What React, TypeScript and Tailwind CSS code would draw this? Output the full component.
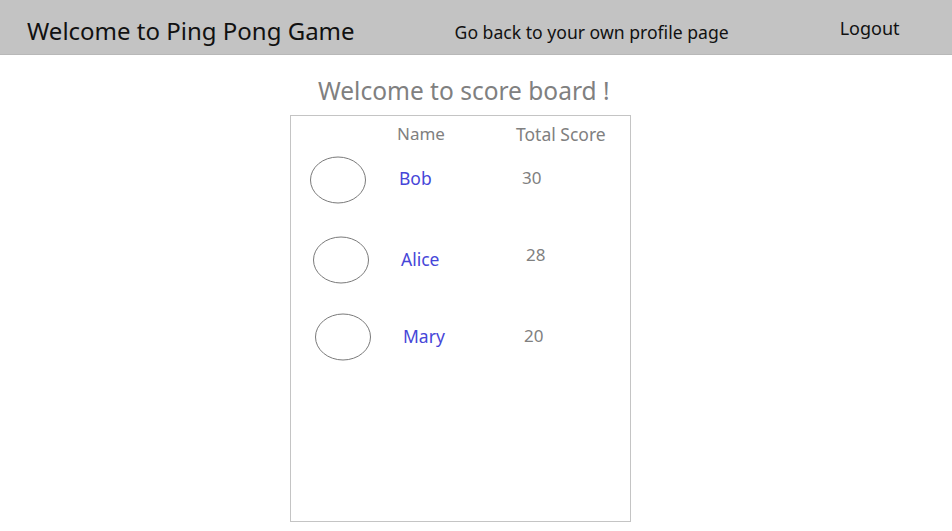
import React from "react";

type Row = {
  name: string;
  score: string;
  rowMt: string;
  ellMl: string;
  nameMl: string;
  nameW: string;
  nameMt: string;
  scoreMt: string;
};

const rows: Row[] = [
  { name: "Bob", score: "30", rowMt: "mt-[10px]", ellMl: "ml-[18px]", nameMl: "ml-[32px]", nameW: "w-[123px]", nameMt: "mt-[10px]", scoreMt: "mt-[10px]" },
  { name: "Alice", score: "28", rowMt: "mt-[32px]", ellMl: "ml-[21px]", nameMl: "ml-[31px]", nameW: "w-[125px]", nameMt: "mt-[11px]", scoreMt: "mt-[7px]" },
  { name: "Mary", score: "20", rowMt: "mt-[29px]", ellMl: "ml-[23px]", nameMl: "ml-[31px]", nameW: "w-[121px]", nameMt: "mt-[11px]", scoreMt: "mt-[11px]" },
];

function Ellipse() {
  return (
    <svg width="58" height="48" viewBox="0 0 58 48" className="shrink-0 block">
      <ellipse cx="29" cy="24" rx="27.5" ry="23" fill="none" stroke="#7a7a7a" strokeWidth="1" />
    </svg>
  );
}

export default function App() {
  return (
    <div className="w-[952px] h-[531px] bg-white font-['Noto_Sans',sans-serif] overflow-hidden">
      <header className="h-[55px] bg-[#c3c3c3] border-b border-[#b8b8b8] flex items-start">
        <div className="ml-[27px] mt-[13px] text-[24px] leading-[36px] text-[#111]">Welcome to Ping Pong Game</div>
        <div className="ml-[100px] mt-[18px] text-[17.6px] leading-[28px] text-[#111]">Go back to your own profile page</div>
        <div className="ml-[111px] mt-[14px] text-[18px] leading-[28px] text-[#111]">Logout</div>
      </header>
      <div className="flex flex-col items-start">
        <div className="mt-[19px] ml-[318px] text-[24.5px] leading-[34px] text-[#808080]">Welcome to score board !</div>
        <div className="mt-[7px] ml-[290px] w-[341px] h-[407px] border border-[#c4c4c4] flex flex-col">
          <div className="flex text-[17px] leading-[24px] text-[#808080] mt-[6px]">
            <span className="ml-[106px] w-[119px]">Name</span>
            <span className="text-[17.5px]">Total Score</span>
          </div>
          {rows.map((r) => (
            <div key={r.name} className={`flex items-start ${r.rowMt}`}>
              <div className={r.ellMl}>
                <Ellipse />
              </div>
              <span className={`${r.nameMl} ${r.nameW} ${r.nameMt} text-[17.5px] leading-[24px] text-[#4646d8]`}>{r.name}</span>
              <span className={`${r.scoreMt} text-[17px] leading-[24px] text-[#808080]`}>{r.score}</span>
            </div>
          ))}
        </div>
      </div>
    </div>
  );
}
